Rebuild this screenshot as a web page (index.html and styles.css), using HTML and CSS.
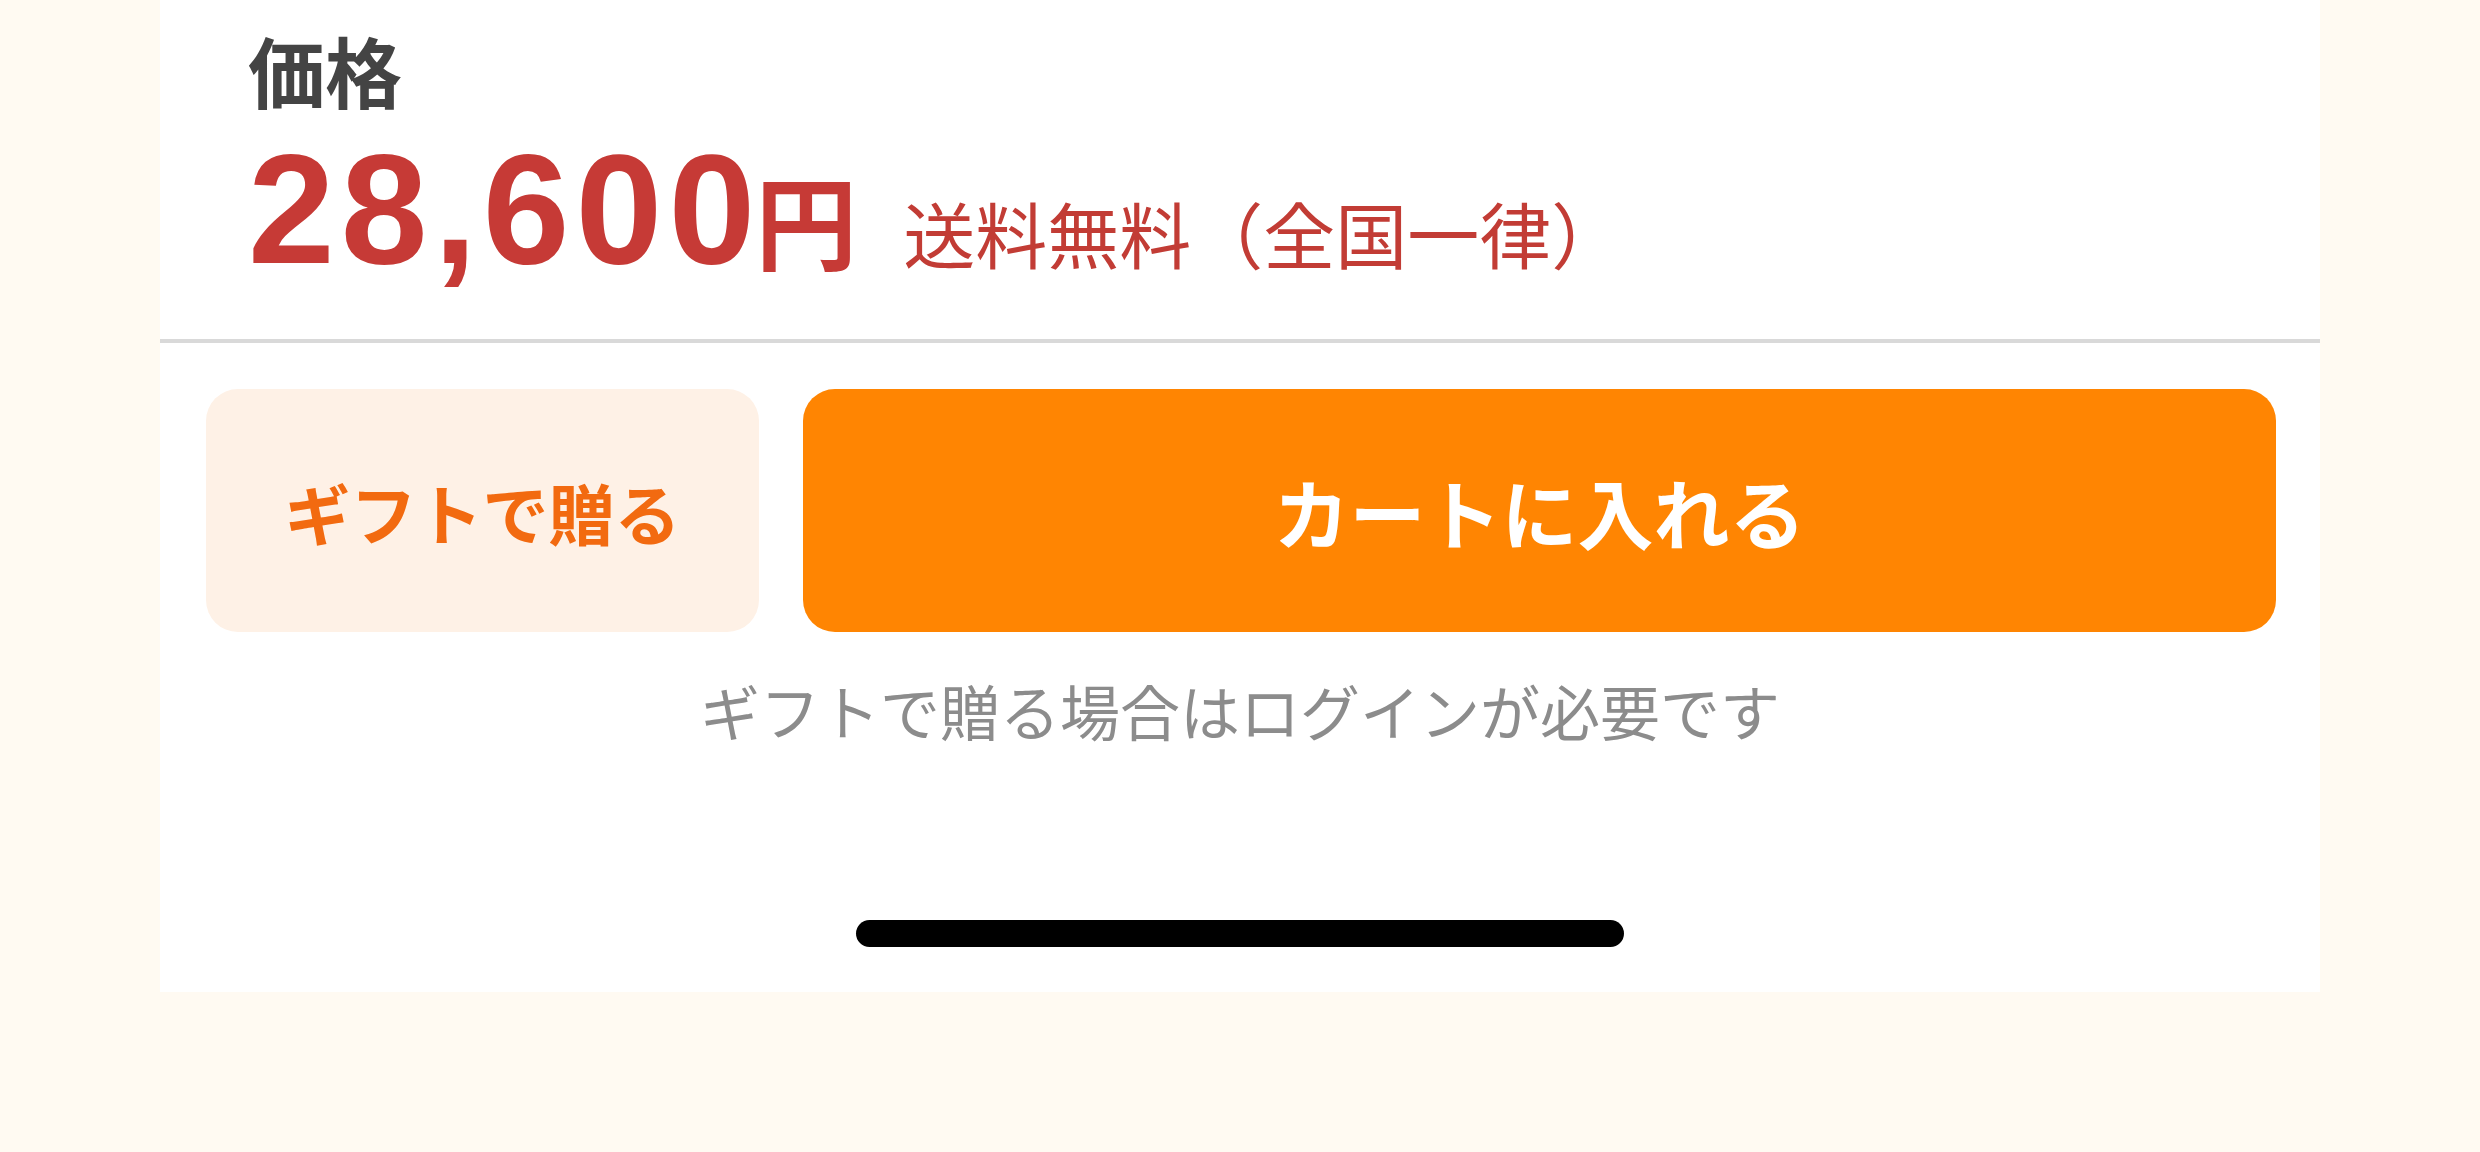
FILE: index.html
```html
<!DOCTYPE html>
<html lang="ja">
<head>
  <meta charset="UTF-8" />
  <title>価格</title>
  <meta name="viewport" content="width=device-width, initial-scale=1" />
  <link rel="stylesheet" href="styles.css">
</head>
<body>
  <div class="sheet">
    <div class="price-block">
      <div class="price-label">価格</div>
      <div class="price-row">
        <span class="price-num">28,600</span><span class="price-yen">円</span>
        <span class="shipping">送料無料（全国一律）</span>
      </div>
    </div>

    <div class="actions">
      <button class="btn btn-gift">ギフトで贈る</button>
      <button class="btn btn-cart">カートに入れる</button>
    </div>

    <p class="note">ギフトで贈る場合はログインが必要です</p>

    <div class="home-bar"></div>
  </div>
</body>
</html>
```

FILE: styles.css
```css
* {
  box-sizing: border-box;
}
body {
  margin: 0;
  background: #fffaf2;
  font-family: "Noto Sans CJK JP", "Noto Sans", sans-serif;
  color: #444;
}
.sheet {
  width: 2160px;
  margin: 0 auto;
  background: #fff;
  padding-bottom: 45px;
}
.price-block {
  height: 343px;
  padding: 31px 0 0 88px;
  border-bottom: 4px solid #d9d9d9;
}
.price-label {
  font-size: 77px;
  line-height: 1;
  font-weight: bold;
  color: #444;
}
.price-row {
  display: flex;
  align-items: baseline;
  margin-top: 23px;
  line-height: 1;
  color: #c63a36;
}
.price-num {
  font-family: "Liberation Sans", Arial, sans-serif;
  font-size: 156px;
  font-weight: bold;
  letter-spacing: 6px;
}
.price-yen {
  font-size: 102px;
  font-weight: bold;
  margin-left: -6px;
}
.shipping {
  font-size: 72px;
  margin-left: 46px;
  color: #c23c35;
}
.actions {
  display: flex;
  gap: 44px;
  padding: 46px 44px 0 46px;
}
.btn {
  height: 243px;
  border: none;
  border-radius: 32px;
  font-family: "Noto Sans CJK JP", sans-serif;
  font-weight: bold;
  cursor: pointer;
}
.btn-gift {
  width: 553px;
  background: #fef1e6;
  color: #f26a10;
  font-size: 66px;
}
.btn-cart {
  flex: 1;
  background: #ff8502;
  color: #fff;
  font-size: 76px;
}
.note {
  margin: 48px 0 0;
  text-align: center;
  font-size: 60px;
  line-height: 1;
  color: #8c8c8c;
}
.home-bar {
  width: 768px;
  height: 27px;
  margin: 180px auto 0;
  border-radius: 14px;
  background: #000;
}
```
